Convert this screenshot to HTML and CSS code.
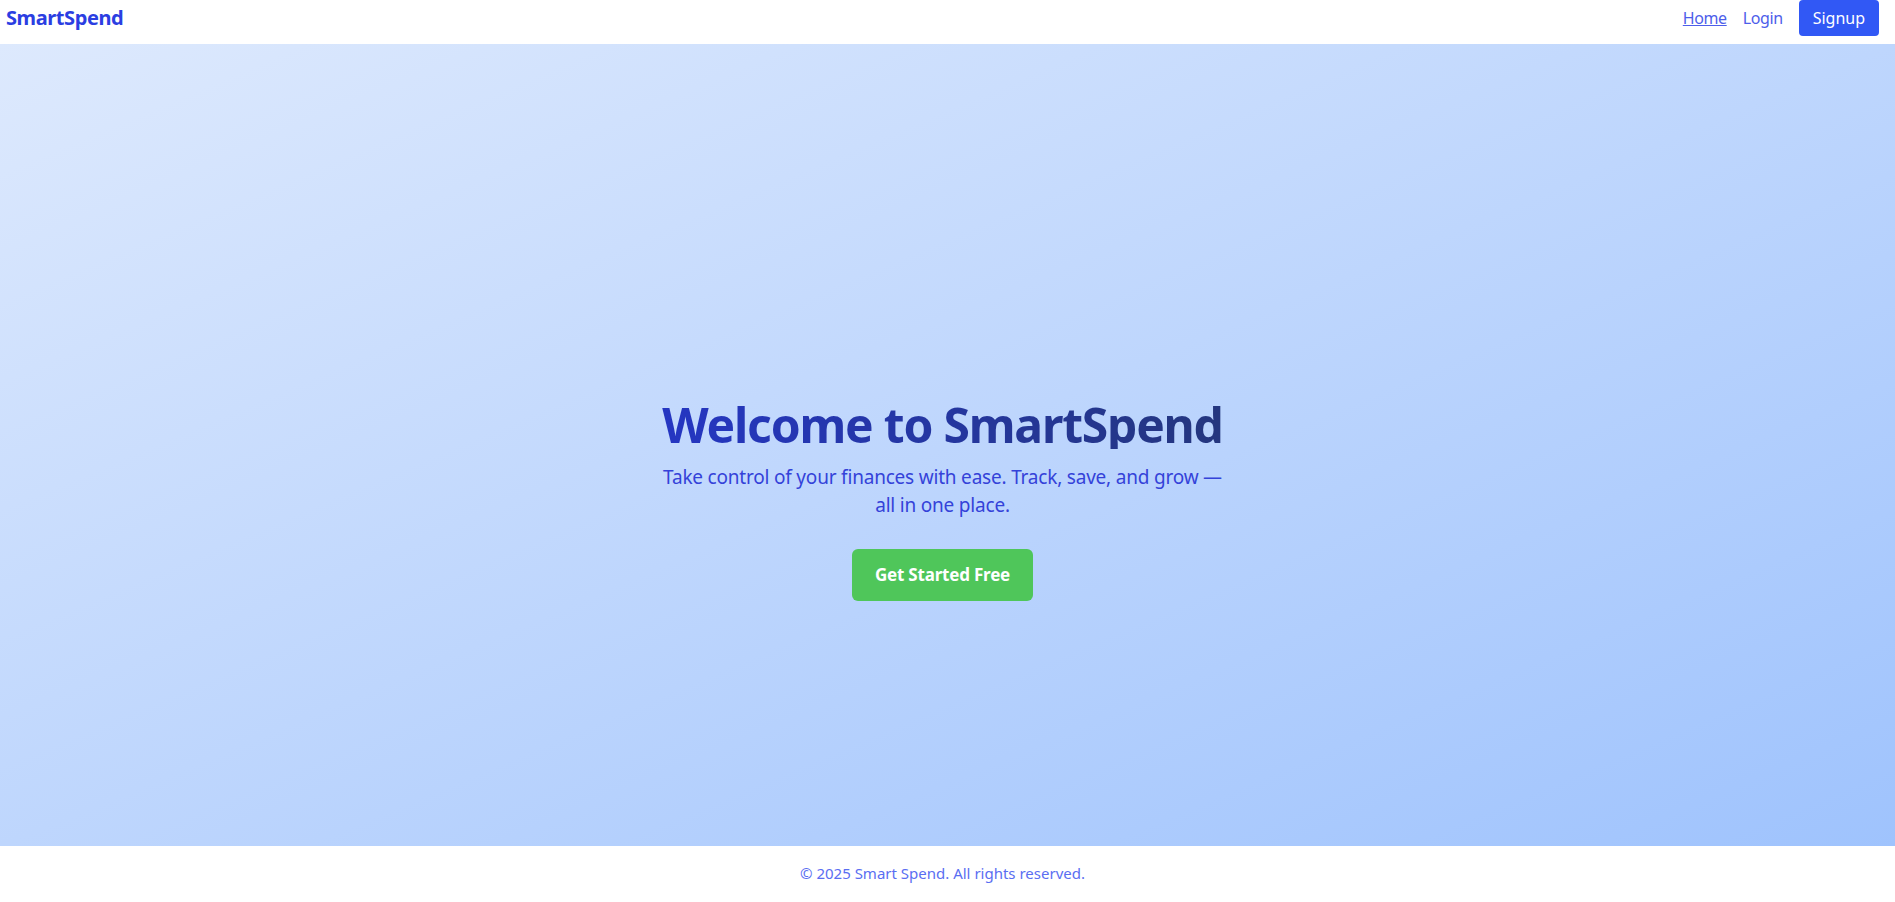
FILE: index.html
```html
<!DOCTYPE html>
<html lang="en">
<head>
<meta charset="utf-8">
<title>SmartSpend</title>
<link rel="stylesheet" href="styles.css">
</head>
<body>
<nav class="nav">
  <a class="logo" href="#">SmartSpend</a>
  <div class="nav-links">
    <a class="nav-link active" href="#">Home</a>
    <a class="nav-link" href="#">Login</a>
    <a class="btn-signup" href="#">Signup</a>
  </div>
</nav>
<main class="hero">
  <h1 class="hero-title">Welcome to SmartSpend</h1>
  <p class="hero-sub">Take control of your finances with ease. Track, save, and grow — all in one place.</p>
  <a class="btn-cta" href="#">Get Started Free</a>
</main>
<footer class="footer">© 2025 Smart Spend. All rights reserved.</footer>
</body>
</html>
```
FILE: styles.css
```css
* { box-sizing: border-box; }
html, body { margin: 0; padding: 0; }
body {
  font-family: "Noto Sans", "Open Sans", sans-serif;
  background: #ffffff;
  height: 902px;
  display: flex;
  flex-direction: column;
}
a { text-decoration: none; }

.nav {
  height: 44px;
  padding: 0 16px 8px 6px;
  display: flex;
  align-items: center;
  justify-content: space-between;
  background: #ffffff;
}
.logo {
  font-size: 20px;
  line-height: 28px;
  font-weight: 700;
  color: #2b3ee2;
  letter-spacing: -0.4px;
}
.nav-links {
  display: flex;
  align-items: center;
  gap: 16px;
}
.nav-link {
  font-size: 16px;
  line-height: 24px;
  color: #4d5eea;
  letter-spacing: -0.4px;
}
.nav-link.active { text-decoration: underline; }
.btn-signup {
  display: block;
  background: #3158f5;
  color: #ffffff;
  font-size: 16px;
  line-height: 36px;
  height: 36px;
  padding: 0 14px;
  border-radius: 4px;
}

.hero {
  flex: 1;
  display: flex;
  flex-direction: column;
  align-items: center;
  justify-content: center;
  padding: 112px 10px 0 0;
  text-align: center;
  background: linear-gradient(to bottom right, #dde9fd, #9fc3fd);
}
.hero-title {
  margin: 0 0 14px;
  font-size: 48px;
  line-height: 48px;
  font-weight: 700;
  letter-spacing: -1.2px;
  background: linear-gradient(to right, #2536c2, #24367e);
  -webkit-background-clip: text;
  background-clip: text;
  color: transparent;
}
.hero-sub {
  margin: 0 0 30px;
  max-width: 576px;
  font-size: 19px;
  line-height: 28px;
  letter-spacing: -0.2px;
  color: #3442d9;
}
.btn-cta {
  display: block;
  background: #4fc65a;
  color: #ffffff;
  font-size: 17px;
  font-weight: 700;
  line-height: 28px;
  padding: 12px 23px;
  letter-spacing: -0.2px;
  border-radius: 6px;
}

.footer {
  height: 56px;
  padding: 0 10px 2px 0;
  display: flex;
  align-items: center;
  justify-content: center;
  font-size: 15px;
  color: #5a6ef2;
  background: #ffffff;
}
```
